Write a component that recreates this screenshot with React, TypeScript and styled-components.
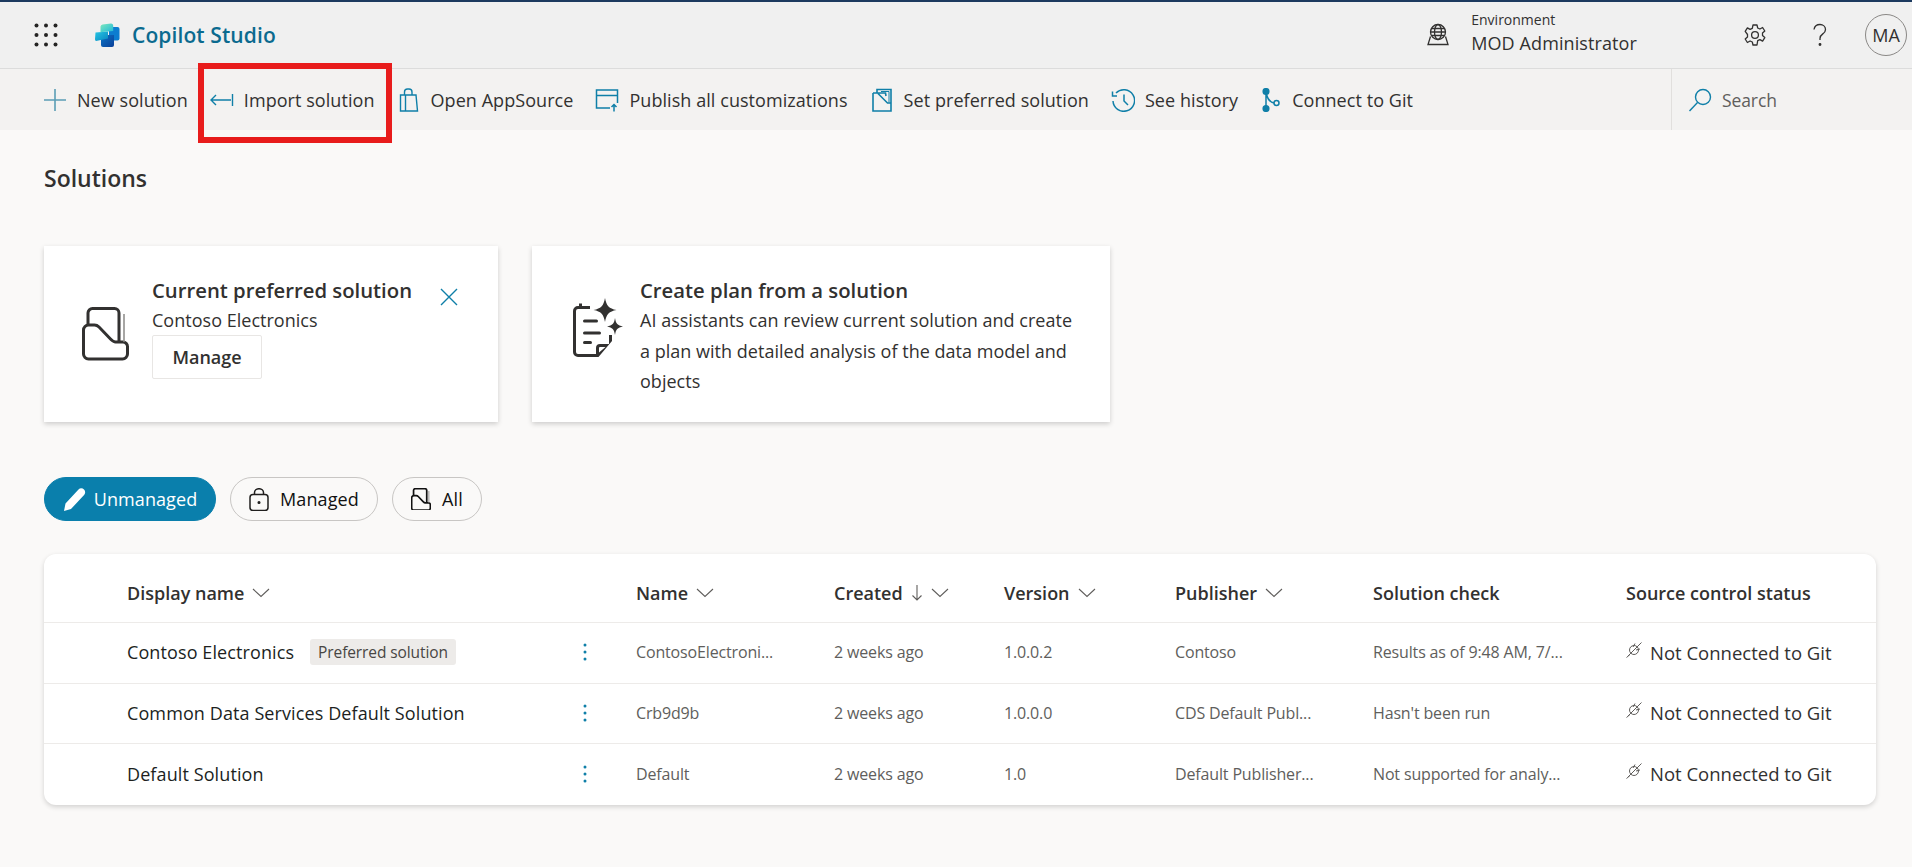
import React from 'react';
import styled, { createGlobalStyle } from 'styled-components';

const GlobalStyle = createGlobalStyle`
  html, body {
    margin: 0;
    padding: 0;
    background: #faf9f8;
    font-family: "Open Sans", "Noto Sans", "Liberation Sans", sans-serif;
    color: #323130;
  }
  * { box-sizing: border-box; }
`;

const BLUE = '#0f7fa8';

const Waffle = () => (
  <svg width="24" height="24" viewBox="0 0 24 24" fill="#252423">
    {[2.5, 12, 21.5].map((y) =>
      [2.5, 12, 21.5].map((x) => <circle key={`${x}-${y}`} cx={x} cy={y} r="2" />),
    )}
  </svg>
);

const Logo = () => (
  <svg width="26" height="25" viewBox="0 0 26 25">
    <defs>
      <linearGradient id="logoTop" x1="0" y1="0" x2="1" y2="1">
        <stop offset="0" stopColor="#7ee8bd" />
        <stop offset="1" stopColor="#1fb8d8" />
      </linearGradient>
      <linearGradient id="logoLeft" x1="0" y1="0" x2="1" y2="1">
        <stop offset="0" stopColor="#27c6e4" />
        <stop offset="1" stopColor="#0a86c0" />
      </linearGradient>
      <linearGradient id="logoBottom" x1="0" y1="0" x2="1" y2="1">
        <stop offset="0" stopColor="#0b74c6" />
        <stop offset="1" stopColor="#0a3f98" />
      </linearGradient>
    </defs>
    <path d="M15 4h8.500A2 2 0 0 1 25.500 6v9.500a2 2 0 0 1-2 2H15z" fill="#0c7dd0" />
    <path d="M7 12h13v10a2 2 0 0 1-2 2H9a2 2 0 0 1-2-2z" fill="url(#logoBottom)" />
    <path d="M1.500 9.500 14 8.500v7L2 18a2 2 0 0 1-1-2z" fill="url(#logoLeft)" />
    <path d="M6.500 3.500a2.500 2.500 0 0 1 2-2L17 .500c1.500 0 2.200 1 2.200 2.200V8l-10.700 1-2 .5z" fill="url(#logoTop)" />
  </svg>
);

const PlusIcon = () => (
  <svg width="24" height="24" viewBox="0 0 24 24" fill="none" stroke="#5b9db5" strokeWidth="1.6">
    <path d="M12 1v22M1 12h22" />
  </svg>
);
const ImportIcon = () => (
  <svg width="24" height="24" viewBox="0 0 24 24" fill="none" stroke={BLUE} strokeWidth="1.4">
    <path d="M1 12h20M6 7 1 12l5 5M22.500 6v12" />
  </svg>
);
const BagIcon = () => (
  <svg width="24" height="24" viewBox="0 0 24 24" fill="none" stroke={BLUE} strokeWidth="1.4">
    <path d="M3.500 7h15.500l1.500 16H3.500zM8.500 23V7M7.500 7V4a3 3 0 0 1 3-3h1.500a3 3 0 0 1 3 3v3" />
  </svg>
);
const PublishIcon = () => (
  <svg width="24" height="24" viewBox="0 0 24 24" fill="none" stroke={BLUE} strokeWidth="1.5">
    <path d="M15 20H1.500V2h21v13M1.500 7.500h21M19 23.500v-7M16.500 19l2.500-2.500 2.500 2.500" />
  </svg>
);
const PreferredIcon = () => (
  <svg width="24" height="24" viewBox="0 0 24 24" fill="none" stroke={BLUE} strokeWidth="1.6">
    <path d="M7 5V1.500h14V15M3 5h12.500l.5 3v0M3 5v18h18v-8h-3.500L8 5.500" />
    <path d="M11 3.500h8v11" strokeWidth="1" />
  </svg>
);
const HistoryIcon = () => (
  <svg width="24" height="24" viewBox="0 0 24 24" fill="none" stroke={BLUE} strokeWidth="1.5">
    <path d="M5 5a10.800 10.800 0 1 1-3 8M1.500 3.500V8H6M13 6.500V13l4 4" />
  </svg>
);
const GitIcon = () => (
  <svg width="22" height="24" viewBox="0 0 22 24" fill="none" stroke={BLUE} strokeWidth="1.5">
    <circle cx="6" cy="3.500" r="2.800" fill={BLUE} />
    <circle cx="6" cy="20.500" r="2.800" fill={BLUE} />
    <circle cx="16.500" cy="15" r="2.500" />
    <path d="M6 5v14M6.500 6c.8 4.500 3.500 8 7.500 9" />
  </svg>
);
const SearchIcon = () => (
  <svg width="24" height="24" viewBox="0 0 24 24" fill="none" stroke={BLUE} strokeWidth="1.4">
    <circle cx="15" cy="9" r="7.500" />
    <path d="M9.500 14.500 1.500 23" />
  </svg>
);
const EnvIcon = () => (
  <svg width="24" height="24" viewBox="0 0 24 24" fill="none" stroke="#323130" strokeWidth="1.3">
    <circle cx="12" cy="9" r="7.500" />
    <ellipse cx="12" cy="9" rx="3.500" ry="7.500" />
    <path d="M4.500 9h15M5.500 5.500h13M5.500 12.500h13M4.500 13.500 2 21.500h20l-2.500-8" />
  </svg>
);
const GearIcon = () => (
  <svg width="24" height="24" viewBox="0 0 24 24" fill="none" stroke="#323130" strokeWidth="1.3">
    <path d="M10 2h4l.7 3 2.200 1 2.700-1.500 2.200 3.500-2.300 2.100v2.400l2.300 2.100-2.200 3.500-2.700-1.500-2.200 1L14 22h-4l-.7-3-2.200-1-2.700 1.500-2.200-3.500 2.300-2.100v-2.400L2.200 8.400 4.400 4.900 7.100 6.400 9.300 5.400z" strokeLinejoin="round" />
    <circle cx="12" cy="12" r="3.400" />
  </svg>
);
const HelpIcon = () => (
  <svg width="24" height="24" viewBox="0 0 24 24" fill="none" stroke="#323130" strokeWidth="1.3">
    <path d="M6 6.500C6.500 3.500 9 1.500 12 1.500c3 0 5.500 2 5.500 5 0 2-1 3.200-2.700 4.400C12.900 12.200 12 13.300 12 15.500V17" />
    <circle cx="12" cy="21.500" r="0.800" fill="#323130" />
  </svg>
);
const CloseIcon = () => (
  <svg width="18" height="18" viewBox="0 0 18 18" fill="none" stroke={BLUE} strokeWidth="1.4">
    <path d="M1 1l16 16M17 1 1 17" />
  </svg>
);
const FolderIcon = ({ size, weight }: { size: number; weight: number }) => (
  <svg width={size} height={(size * 54) / 47} viewBox="0 0 47 54" fill="none" stroke="currentColor" strokeWidth={weight} strokeLinejoin="round">
    <path d="M6 17V6a4.500 4.500 0 0 1 4.500-4.500h22A4.500 4.500 0 0 1 37 6v28" />
    <path d="M1.500 23a5 5 0 0 1 5-5h6c2 0 3 .5 4.500 2L28.500 32c1.500 1.500 3 3 5 3H41a4.500 4.500 0 0 1 4.500 4.500V47a5 5 0 0 1-5 5H6.500a5 5 0 0 1-5-5z" />
    <path d="M42 7v28" strokeWidth={weight * 0.5} stroke="#8a8886" />
  </svg>
);
const PlanIcon = () => (
  <svg width="50" height="60" viewBox="0 0 50 60" fill="#323130">
    <path d="M5 8h1V5.500h3V8h8v3H5a2 2 0 0 0-2 2v41a2 2 0 0 0 2 2h20v3H5a5 5 0 0 1-5-5V13a5 5 0 0 1 5-5z" />
    <path d="M32 0c1.500 8 4 10.500 11.500 12C36 13.500 33.500 16 32 24c-1.500-8-4-10.500-11.500-12C28 10.500 30.500 8 32 0z" />
    <path d="M42 20c1 6 2.500 7 8 8.500-5.500 1.500-7 2.500-8 8.500-1-6-2.500-7-8-8.500 5.500-1.500 7-2.500 8-8.500z" />
    <rect x="10" y="21.500" width="15" height="3" rx="1.500" />
    <rect x="10" y="33.500" width="18" height="3" rx="1.500" />
    <rect x="10" y="43" width="9" height="3" rx="1.500" />
    <path d="M36 37h3v6L25.500 59H23v-9a4 4 0 0 1 4-4h9zM27 49a1 1 0 0 0-1 1v4.500l6.500-5.500z" />
  </svg>
);
const PencilIcon = () => (
  <svg width="23" height="23" viewBox="0 0 23 23" fill="#fff">
    <path d="M15.500 1.500a3.800 3.800 0 0 1 5.500 0c1.500 1.500 1.500 3.700.3 5.200L8 21 1 23l1.500-7.500z" />
  </svg>
);
const LockIcon = () => (
  <svg width="20" height="23" viewBox="0 0 20 23" fill="none" stroke="#201f1e" strokeWidth="1.5">
    <rect x="1" y="6.500" width="18" height="16" rx="3" />
    <path d="M5.500 6.500V4.500a4.500 3.800 0 0 1 9 0v2" />
    <circle cx="10" cy="14.500" r="0.800" fill="#201f1e" />
  </svg>
);
const ChevronIcon = () => (
  <svg width="18" height="10" viewBox="0 0 18 10" fill="none" stroke="#605e5c" strokeWidth="1.1">
    <path d="M1 1l8 7.500L17 1" />
  </svg>
);
const DownArrow = () => (
  <svg width="12" height="18" viewBox="0 0 12 18" fill="none" stroke="#605e5c" strokeWidth="1.1">
    <path d="M6 1v15M1.500 11.500 6 16l4.500-4.500" />
  </svg>
);
const KebabIcon = () => (
  <svg width="4" height="20" viewBox="0 0 4 20" fill={BLUE}>
    <circle cx="2" cy="3" r="1.500" />
    <circle cx="2" cy="10" r="1.500" />
    <circle cx="2" cy="17" r="1.500" />
  </svg>
);
const PlugIcon = () => (
  <svg width="16" height="16" viewBox="0 0 16 16" fill="none" stroke="#605e5c" strokeWidth="1">
    <path d="M.500 15.500l3.500-3M15.500.500l-3 3" />
    <circle cx="8" cy="8" r="4.500" />
    <path d="M2 14 14 2M9 1.500 7 5M14 7l-4 1" />
  </svg>
);

const Page = styled.div`
  position: relative;
  width: 1912px;
  height: 867px;
  overflow: hidden;
  background: #faf9f8;
`;

const TopBar = styled.header`
  height: 69px;
  display: flex;
  align-items: center;
  background: #f0f0f0;
  border-top: 2px solid #1c3a5f;
  border-bottom: 1px solid #dcdcdc;
`;

const WaffleSlot = styled.div`
  display: flex;
  width: 94px;
  padding-left: 34px;
`;

const Brand = styled.div`
  display: flex;
  align-items: center;
  gap: 12px;
  color: #0b6a8f;
  font-size: 21px;
  font-weight: 600;
  letter-spacing: 0.1px;
  flex: 1;
`;

const EnvBlock = styled.div`
  display: flex;
  align-items: center;
  gap: 21px;
  margin-right: 106px;
`;

const EnvText = styled.div`
  display: flex;
  flex-direction: column;
  margin-bottom: 4px;
`;

const EnvLabel = styled.span`
  font-size: 14px;
  line-height: 18px;
`;

const EnvName = styled.span`
  margin-top: 2px;
  font-size: 18px;
  line-height: 25px;
  letter-spacing: 0.1px;
`;

const TopActions = styled.div`
  display: flex;
  align-items: center;
  gap: 41px;
`;

const Avatar = styled.div`
  width: 42px;
  height: 42px;
  margin-left: -8px;
  margin-right: 5px;
  border: 1px solid #8a8886;
  border-radius: 50%;
  display: flex;
  align-items: center;
  justify-content: center;
  font-size: 18px;
`;

const Toolbar = styled.nav`
  height: 61px;
  display: flex;
  align-items: stretch;
  background: #f3f2f1;
  justify-content: space-between;
`;

const ToolItems = styled.div`
  display: flex;
  align-items: center;
  gap: 22px;
  padding-left: 43px;
`;

const ToolItem = styled.div`
  display: flex;
  align-items: center;
  gap: 10px;
  font-size: 18px;
  letter-spacing: 0.06px;
  white-space: nowrap;
`;

const SearchBox = styled.div`
  width: 241px;
  display: flex;
  align-items: center;
  gap: 10px;
  padding-left: 16px;
  border-left: 1px solid #e1dfdd;
  color: #605e5c;
  font-size: 17.5px;
  letter-spacing: -0.1px;
`;

const Highlight = styled.div`
  position: absolute;
  left: 198px;
  top: 63px;
  width: 194px;
  height: 80px;
  border: 6px solid #e81c1c;
`;

const Content = styled.main`
  padding: 0 36px 0 44px;
`;

const Title = styled.h1`
  margin: 30px 0 0;
  height: 36px;
  font-size: 23px;
  line-height: 36px;
  font-weight: 600;
`;

const Cards = styled.section`
  display: flex;
  gap: 34px;
  margin-top: 50px;
`;

const Card = styled.div<{ $width: number }>`
  position: relative;
  width: ${(p) => p.$width}px;
  height: 176px;
  background: #fff;
  box-shadow: 0 2px 5px rgba(0, 0, 0, 0.18);
  display: flex;
  padding: 29px 0 0 34px;
`;

const CardIcon = styled.div<{ $left: number; $top: number }>`
  width: 74px;
  padding: ${(p) => p.$top}px 0 0 ${(p) => p.$left}px;
  color: #323130;
`;

const CardBody = styled.div`
  display: flex;
  flex-direction: column;
`;

const CardTitle = styled.div`
  font-size: 20.3px;
  line-height: 30px;
  font-weight: 600;
`;

const CardText = styled.div`
  font-size: 18px;
  line-height: 30.5px;
  letter-spacing: 0.02px;
`;

const CloseSlot = styled.div`
  position: absolute;
  top: 42px;
  right: 40px;
  display: flex;
`;

const ManageButton = styled.div`
  width: 110px;
  height: 44px;
  margin-top: -1px;
  display: flex;
  align-items: center;
  justify-content: center;
  background: #fff;
  border: 1px solid #e8e6e4;
  border-radius: 2px;
  font-size: 18px;
  font-weight: 600;
`;

const Chips = styled.div`
  display: flex;
  gap: 14px;
  margin-top: 55px;
`;

const Chip = styled.div<{ $active?: boolean; $width: number }>`
  width: ${(p) => p.$width}px;
  height: 44px;
  display: flex;
  align-items: center;
  justify-content: center;
  gap: ${(p) => (p.$active ? 8 : 11)}px;
  border-radius: 22px;
  font-size: 18px;
  letter-spacing: 0.1px;
  background: ${(p) => (p.$active ? '#0a7fac' : 'transparent')};
  color: ${(p) => (p.$active ? '#fff' : '#111')};
  border: 1px solid ${(p) => (p.$active ? '#0a7fac' : '#c8c6c4')};
`;

const Table = styled.section`
  margin-top: 33px;
  width: 1832px;
  background: #fff;
  border-radius: 12px;
  box-shadow: 0 2px 5px rgba(0, 0, 0, 0.16);
  overflow: hidden;
`;

const Row = styled.div<{ $header?: boolean; $height: number }>`
  display: grid;
  grid-template-columns: 83px 456px 53px 198px 170px 171px 198px 253px 1fr;
  height: ${(p) => p.$height}px;
  align-items: center;
  padding: ${(p) => (p.$header ? '9px 0 0' : '0 0 2px')};
  border-top: ${(p) => (p.$header ? 'none' : '1px solid #edebe9')};
`;

const HeaderCell = styled.div`
  display: flex;
  align-items: center;
  gap: 8px;
  font-size: 18px;
  font-weight: 600;
  white-space: nowrap;
`;

const NameCell = styled.div`
  display: flex;
  align-items: center;
  gap: 16px;
  font-size: 18px;
  color: #201f1e;
  letter-spacing: 0.1px;
  white-space: nowrap;
`;

const Badge = styled.span`
  padding: 2px 8px;
  background: #edebe9;
  border-radius: 3px;
  font-size: 15.5px;
  letter-spacing: -0.1px;
  color: #484644;
`;

const Cell = styled.div`
  font-size: 16px;
  letter-spacing: -0.15px;
  color: #605e5c;
  white-space: nowrap;
`;

const GitCell = styled.div`
  display: flex;
  align-items: center;
  gap: 8px;
  font-size: 18.5px;
  color: #323130;
  white-space: nowrap;
  svg {
    margin-top: -5px;
  }
`;

const Kebab = styled.div`
  display: flex;
`;

const Empty = styled.div``;

const toolItems = [
  { icon: <PlusIcon />, label: 'New solution' },
  { icon: <ImportIcon />, label: 'Import solution' },
  { icon: <BagIcon />, label: 'Open AppSource' },
  { icon: <PublishIcon />, label: 'Publish all customizations' },
  { icon: <PreferredIcon />, label: 'Set preferred solution' },
  { icon: <HistoryIcon />, label: 'See history' },
  { icon: <GitIcon />, label: 'Connect to Git' },
];

const rows = [
  {
    height: 61,
    name: 'Contoso Electronics',
    preferred: true,
    id: 'ContosoElectroni...',
    version: '1.0.0.2',
    publisher: 'Contoso',
    check: 'Results as of 9:48 AM, 7/...',
  },
  {
    height: 60,
    name: 'Common Data Services Default Solution',
    id: 'Crb9d9b',
    version: '1.0.0.0',
    publisher: 'CDS Default Publ...',
    check: "Hasn't been run",
  },
  {
    height: 62,
    name: 'Default Solution',
    id: 'Default',
    version: '1.0',
    publisher: 'Default Publisher...',
    check: 'Not supported for analy...',
  },
];

function App() {
  return (
    <Page>
      <GlobalStyle />
      <TopBar>
        <WaffleSlot>
          <Waffle />
        </WaffleSlot>
        <Brand>
          <Logo />
          Copilot Studio
        </Brand>
        <EnvBlock>
          <EnvIcon />
          <EnvText>
            <EnvLabel>Environment</EnvLabel>
            <EnvName>MOD Administrator</EnvName>
          </EnvText>
        </EnvBlock>
        <TopActions>
          <GearIcon />
          <HelpIcon />
          <Avatar>MA</Avatar>
        </TopActions>
      </TopBar>
      <Toolbar>
        <ToolItems>
          {toolItems.map((item) => (
            <ToolItem key={item.label}>
              {item.icon}
              {item.label}
            </ToolItem>
          ))}
        </ToolItems>
        <SearchBox>
          <SearchIcon />
          Search
        </SearchBox>
      </Toolbar>
      <Highlight />
      <Content>
        <Title>Solutions</Title>
        <Cards>
          <Card $width={454}>
            <CardIcon $left={4} $top={32}>
              <FolderIcon size={47} weight={3} />
            </CardIcon>
            <CardBody>
              <CardTitle>Current preferred solution</CardTitle>
              <CardText>Contoso Electronics</CardText>
              <ManageButton>Manage</ManageButton>
            </CardBody>
            <CloseSlot>
              <CloseIcon />
            </CloseSlot>
          </Card>
          <Card $width={578}>
            <CardIcon $left={7} $top={23}>
              <PlanIcon />
            </CardIcon>
            <CardBody>
              <CardTitle>Create plan from a solution</CardTitle>
              <CardText>
                AI assistants can review current solution and create
                <br />a plan with detailed analysis of the data model and
                <br />
                objects
              </CardText>
            </CardBody>
          </Card>
        </Cards>
        <Chips>
          <Chip $active $width={172}>
            <PencilIcon />
            Unmanaged
          </Chip>
          <Chip $width={148}>
            <LockIcon />
            Managed
          </Chip>
          <Chip $width={90}>
            <FolderIcon size={20} weight={4} />
            All
          </Chip>
        </Chips>
        <Table>
          <Row $header $height={68}>
            <Empty />
            <HeaderCell>
              Display name <ChevronIcon />
            </HeaderCell>
            <Empty />
            <HeaderCell>
              Name <ChevronIcon />
            </HeaderCell>
            <HeaderCell>
              Created <DownArrow /> <ChevronIcon />
            </HeaderCell>
            <HeaderCell>
              Version <ChevronIcon />
            </HeaderCell>
            <HeaderCell>
              Publisher <ChevronIcon />
            </HeaderCell>
            <HeaderCell>Solution check</HeaderCell>
            <HeaderCell>Source control status</HeaderCell>
          </Row>
          {rows.map((row) => (
            <Row key={row.name} $height={row.height}>
              <Empty />
              <NameCell>
                {row.name}
                {row.preferred && <Badge>Preferred solution</Badge>}
              </NameCell>
              <Kebab>
                <KebabIcon />
              </Kebab>
              <Cell>{row.id}</Cell>
              <Cell>2 weeks ago</Cell>
              <Cell>{row.version}</Cell>
              <Cell>{row.publisher}</Cell>
              <Cell>{row.check}</Cell>
              <GitCell>
                <PlugIcon />
                Not Connected to Git
              </GitCell>
            </Row>
          ))}
        </Table>
      </Content>
    </Page>
  );
}

export default App;
